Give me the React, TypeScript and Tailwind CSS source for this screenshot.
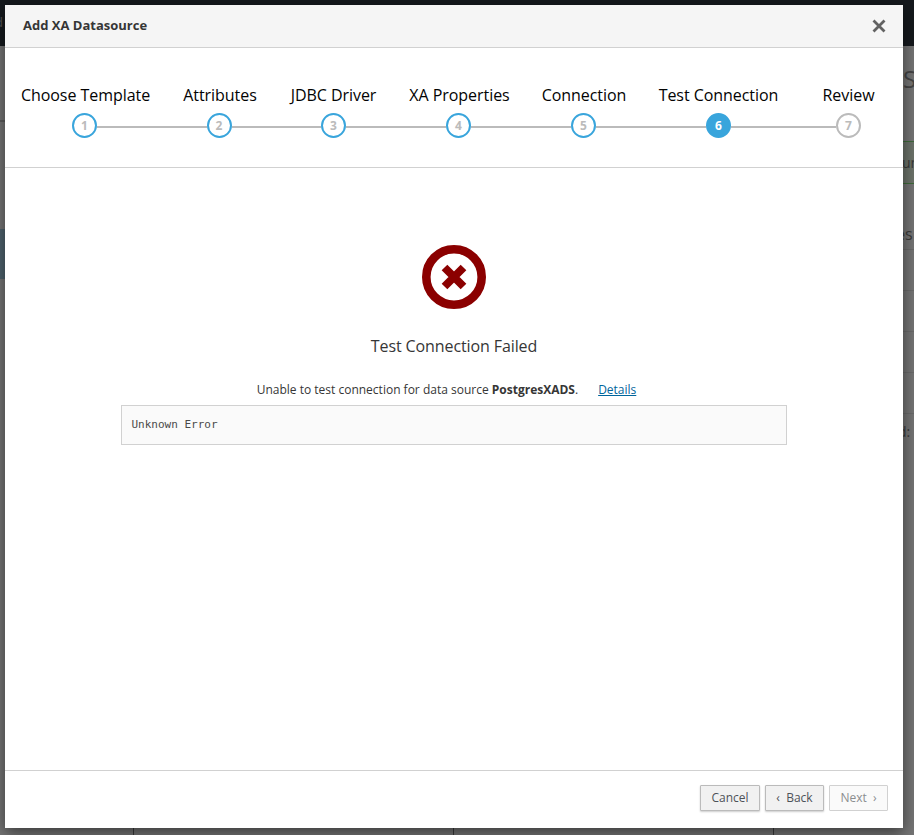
const steps = [
  { label: "Choose Template", cell: "w-[159px]", text: "pl-[2px]" },
  { label: "Attributes", cell: "w-[110px]", text: "pl-[2px]" },
  { label: "JDBC Driver", cell: "w-[119px]", text: "" },
  { label: "XA Properties", cell: "w-[131px]", text: "pl-[2px]" },
  { label: "Connection", cell: "w-[119px]", text: "pl-[1px]" },
  { label: "Test Connection", cell: "w-[151px]", text: "" },
  { label: "Review", cell: "flex-1", text: "" },
];
const current = 5;

function Step({ index }: { index: number }) {
  const { label, cell, text } = steps[index];
  const first = index === 0;
  const last = index === steps.length - 1;
  const active = index === current;
  const pending = index > current;
  return (
    <div className={cell}>
      <div className={`h-[22px] whitespace-nowrap text-center text-[16px] leading-[22px] tracking-[-0.05px] text-[#030303] ${text}`}>
        {label}
      </div>
      <div className="mt-[7px] flex items-center">
        <div className={first ? "mt-[3px] h-[2px] flex-1" : "mt-[3px] h-[2px] flex-1 bg-[#bbbbbb]"} />
        <div
          className={
            active
              ? "flex h-[25px] w-[25px] shrink-0 items-center justify-center rounded-full border-2 border-[#39a5dc] bg-[#39a5dc] text-[12px] font-bold text-white"
              : pending
                ? "flex h-[25px] w-[25px] shrink-0 items-center justify-center rounded-full border-2 border-[#bbbbbb] bg-white text-[12px] font-bold text-[#bbbbbb]"
                : "flex h-[25px] w-[25px] shrink-0 items-center justify-center rounded-full border-2 border-[#39a5dc] bg-white text-[12px] font-bold text-[#bbbbbb]"
          }
        >
          {index + 1}
        </div>
        <div className={last ? "mt-[3px] h-[2px] flex-1" : "mt-[3px] h-[2px] flex-1 bg-[#bbbbbb]"} />
      </div>
    </div>
  );
}

export default function App() {
  return (
    <div className="relative flex h-[835px] w-[914px] flex-col overflow-hidden bg-[#757575] font-['Open_Sans',sans-serif]">
      {/* page behind the backdrop, only its edges show */}
      <div className="flex h-[46px] shrink-0 items-center bg-[#15191d] text-[13px] text-[#555555]">
        <span className="-ml-[5px]">d</span>
      </div>
      <div className="flex flex-1 justify-between overflow-hidden">
        <div className="w-[5px] pt-[48px]">
          <div className="h-[27px] border-b border-[#5c5c5c]" />
          <div className="h-[108px] border-t border-[#5c5c5c]" />
          <div className="h-[50px] bg-[#4f636d]" />
        </div>
        <div className="w-[11px] overflow-hidden whitespace-nowrap text-[#3a3a3a]">
          <div className="mt-[18px] h-[30px] text-[24px] leading-[30px] text-[#444444]">S</div>
          <div className="mt-[47px] flex h-[43px] items-center border-y border-[#3f6b3a] bg-[#6c736a] text-[14px] [text-indent:-1px]">un</div>
          <div className="mt-[39px] h-[22px] text-[16px] leading-[22px] [text-indent:-7px]">es</div>
          <div className="mt-[4px] h-[41px] border-t border-[#6a6a6a]" />
          <div className="h-[41px] border-t border-[#6a6a6a]" />
          <div className="h-[41px] border-t border-[#6a6a6a]" />
          <div className="h-[41px] border-t border-[#6a6a6a]" />
          <div className="h-[30px] border-t border-[#6a6a6a] pt-[9px] text-[14px] leading-[18px] [text-indent:-5px]">d:</div>
        </div>
      </div>
      <div className="flex h-[7px] shrink-0 pl-[133px]">
        <div className="w-[320px] border-l border-[#3a3a3a]" />
        <div className="w-[320px] border-l border-[#3a3a3a]" />
        <div className="border-l border-[#3a3a3a]" />
      </div>

      {/* modal */}
      <div className="absolute left-[5px] top-[5px] flex h-[823px] w-[898px] flex-col bg-white shadow-[0_5px_15px_rgba(0,0,0,0.5)]">
        <div className="flex h-[43px] shrink-0 items-center justify-between border-b border-[#d1d1d1] bg-[#f5f5f5] pl-[18px] pr-[17px]">
          <h1 className="text-[13px] font-bold text-[#363636]">Add XA Datasource</h1>
          <svg width="14" height="14" viewBox="0 0 14 14" className="text-[#626262]">
            <path d="M1.5 1.5 L12.5 12.5 M12.5 1.5 L1.5 12.5" fill="none" stroke="currentColor" strokeWidth="2.8" />
          </svg>
        </div>

        <div className="flex h-[120px] shrink-0 border-b border-[#d1d1d1] pt-[36px]">
          {steps.map((s, i) => (
            <Step key={s.label} index={i} />
          ))}
        </div>

        <div className="flex flex-1 flex-col items-center pt-[77px]">
          <svg width="64" height="64" viewBox="0 0 64 64">
            <circle cx="32" cy="32" r="27.7" fill="none" stroke="#8b0000" strokeWidth="8.6" />
            <path d="M22.5 22.5 L41.5 41.5 M41.5 22.5 L22.5 41.5" fill="none" stroke="#8b0000" strokeWidth="8" />
          </svg>
          <h2 className="mt-[26px] text-[16px] leading-[22px] tracking-[-0.1px] text-[#363636]">Test Connection Failed</h2>
          <p className="mt-[24px] pr-[15px] text-[12px] leading-[17px] text-[#363636]">
            Unable to test connection for data source <b>PostgresXADS</b>.
            <a href="#" className="ml-[20px] text-[#00659c] underline">Details</a>
          </p>
          <pre className="mt-[7px] h-[40px] w-[666px] border border-[#d1d1d1] bg-[#fafafa] px-[9.5px] py-[11px] font-['DejaVu_Sans_Mono',monospace] text-[11px] leading-[15px] text-[#4a4a4a]">Unknown Error</pre>
        </div>

        <div className="flex h-[58px] shrink-0 items-start justify-end gap-[5px] border-t border-[#d1d1d1] pr-[15px] pt-[14px]">
          <button className="h-[26px] w-[60px] rounded-[1px] border border-[#bbbbbb] bg-[#f1f1f1] text-[12px] text-[#4d5258] shadow-[0_1px_2px_rgba(0,0,0,0.2)]">Cancel</button>
          <button className="h-[26px] w-[59px] rounded-[1px] border border-[#bbbbbb] bg-[#f1f1f1] text-[12px] text-[#4d5258] shadow-[0_1px_2px_rgba(0,0,0,0.2)]">‹&nbsp; Back</button>
          <button disabled className="h-[26px] w-[59px] rounded-[1px] border border-[#d1d1d1] bg-[#fafafa] text-[12px] text-[#8b8d8f]">Next&nbsp; ›</button>
        </div>
      </div>
    </div>
  );
}
